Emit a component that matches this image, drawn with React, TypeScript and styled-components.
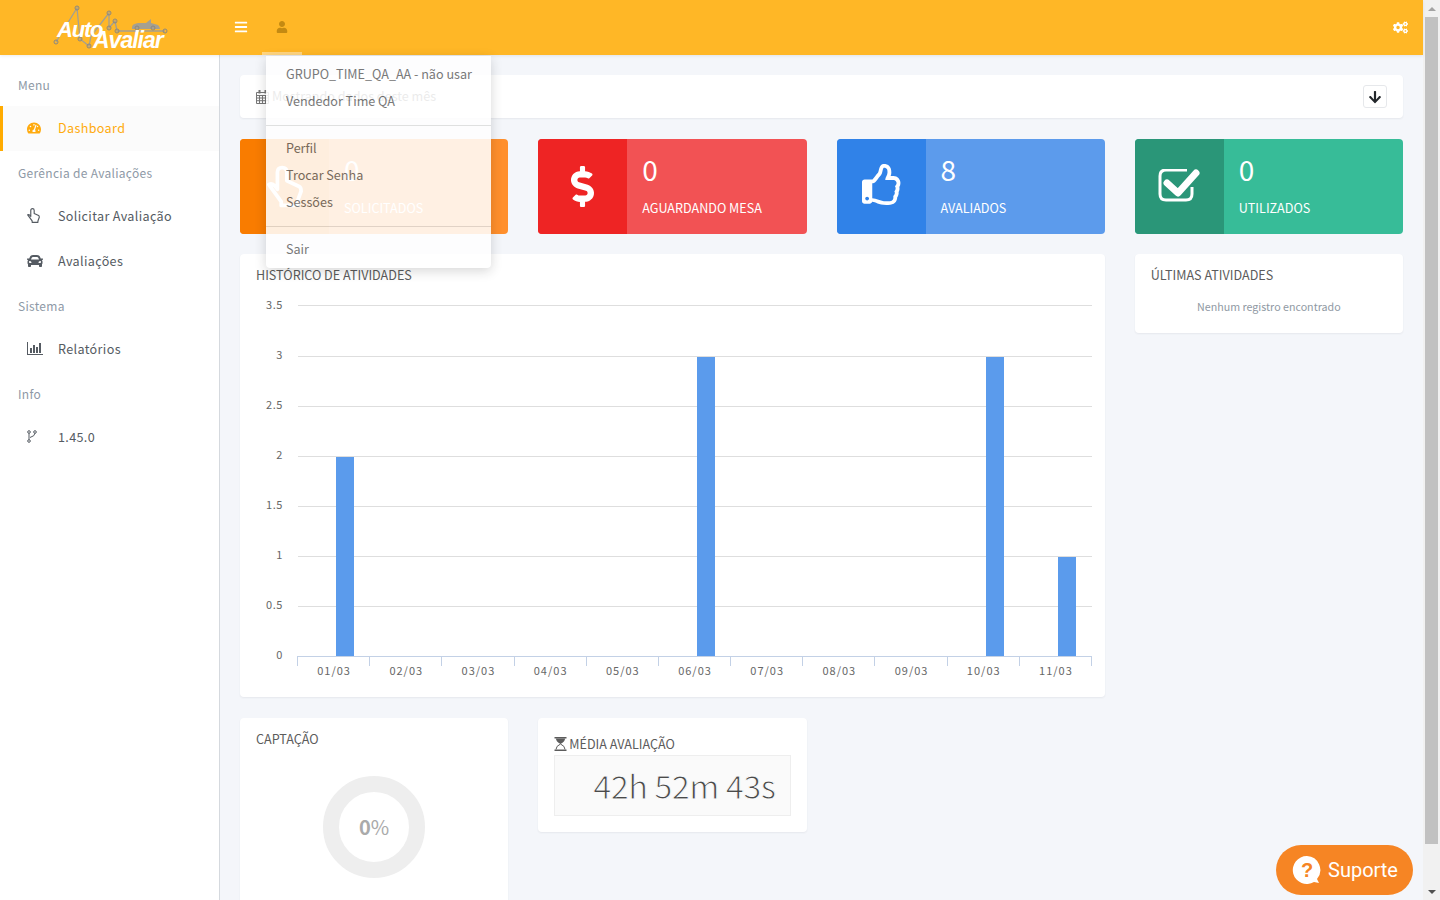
import React from "react";
import styled, { createGlobalStyle } from "styled-components";
import { FaArrowDown, FaBars, FaCar, FaCogs, FaDollarSign, FaRegThumbsUp, FaTachometerAlt, FaUser } from "react-icons/fa";

const GlobalStyle = createGlobalStyle`
  html, body {
    margin: 0;
    padding: 0;
    height: 100%;
    overflow: hidden;
  }
  body {
    font-family: "Noto Sans CJK SC", "Noto Sans", sans-serif;
    font-size: 12.6px;
    color: #555;
    background: #f4f6fa;
  }
  * {
    box-sizing: border-box;
  }
`;

const Shell = styled.div`
  display: flex;
  width: 1440px;
  height: 900px;
  overflow: hidden;
`;

const Page = styled.div`
  flex: 1;
  min-width: 0;
  display: flex;
  flex-direction: column;
  position: relative;
`;

const Header = styled.header`
  height: 55px;
  flex: none;
  display: flex;
  align-items: stretch;
  background: #ffb726;
  box-shadow: 0 1px 3px rgba(0, 0, 0, 0.08);
  position: relative;
  z-index: 2;
`;

const Brand = styled.div`
  width: 221px;
  flex: none;
`;

const NavItem = styled.div<{ $active?: boolean }>`
  width: 40px;
  height: 55px;
  margin-right: 1px;
  display: flex;
  align-items: center;
  justify-content: center;
  color: ${(p) => (p.$active ? "#c48a12" : "#fff")};
  font-size: ${(p) => (p.$active ? "12px" : "14px")};
  border-bottom: 3px solid ${(p) => (p.$active ? "rgba(255,255,255,0.42)" : "transparent")};
  padding-top: 2px;
`;

const HeaderRight = styled.div`
  margin-left: auto;
  width: 46px;
  display: flex;
  align-items: center;
  justify-content: center;
  color: #fff;
  font-size: 15px;
`;

const Body = styled.div`
  flex: 1;
  min-height: 0;
  display: flex;
`;

const Sidebar = styled.aside`
  width: 220px;
  flex: none;
  background: #fff;
  border-right: 1px solid #d5d9de;
  padding-top: 8px;
`;

const SideLabel = styled.div`
  height: 43px;
  padding: 0 0 1px 18px;
  display: flex;
  align-items: center;
  font-size: 12px;
  letter-spacing: 0.3px;
  color: #8e99a6;
`;

const SideRow = styled.div<{ $active?: boolean }>`
  height: 45px;
  display: flex;
  align-items: center;
  padding: 0 0 2px ${(p) => (p.$active ? "24px" : "27px")};
  border-left: ${(p) => (p.$active ? "3px solid #ffab00" : "none")};
  background: ${(p) => (p.$active ? "#fbfbfb" : "transparent")};
  color: ${(p) => (p.$active ? "#ffab0f" : "#555b62")};
  font-size: 12.6px;
  letter-spacing: 0.35px;
  line-height: 20px;
`;

const SideIcon = styled.span`
  width: 31px;
  flex: none;
  display: flex;
  align-items: center;
  font-size: 16px;
`;

const Main = styled.main`
  flex: 1;
  min-width: 0;
  padding: 20px 20px 0;
  overflow: hidden;
`;

const Panel = styled.section`
  background: #fff;
  border-radius: 4px;
  box-shadow: 0 1px 2px rgba(40, 50, 70, 0.07);
`;

const FilterBar = styled(Panel)`
  height: 43px;
  padding: 0 16px;
  display: flex;
  align-items: center;
  margin-bottom: 21px;
`;

const FilterText = styled.span`
  display: flex;
  align-items: center;
  gap: 3px;
  color: #777;
  font-size: 12.6px;
  & > span {
    color: #666;
    margin-bottom: 2px;
  }
`;

const ToggleButton = styled.button`
  margin-left: auto;
  width: 24px;
  height: 23px;
  padding: 0;
  display: flex;
  align-items: center;
  justify-content: center;
  background: #fff;
  border: 1px solid #e6e8eb;
  border-radius: 3px;
  color: #23272b;
  font-size: 14px;
`;

const Grid = styled.div`
  display: grid;
  grid-template-columns: repeat(4, minmax(0, 1fr));
  column-gap: 30px;
  row-gap: 20px;
  align-items: start;
`;

const StatCard = styled.div<{ $bg: string }>`
  height: 95px;
  display: flex;
  border-radius: 4px;
  overflow: hidden;
  background: ${(p) => p.$bg};
  color: #fff;
`;

const StatIcon = styled.div<{ $bg: string }>`
  width: 89px;
  flex: none;
  display: flex;
  align-items: center;
  justify-content: center;
  background: ${(p) => p.$bg};
  font-size: 41px;
`;

const ThumbIcon = styled(FaRegThumbsUp)`
  margin: 0 0 4px 2px;
`;

const StatBody = styled.div`
  padding: 12px 0 0 15px;
`;

const StatValue = styled.div`
  font-size: 28px;
  line-height: 36px;
`;

const StatLabel = styled.div`
  margin-top: 11px;
  font-size: 12.6px;
  line-height: 20px;
`;

const ChartPanel = styled(Panel)`
  grid-column: span 3;
  height: 443px;
  padding: 11px 16px 0;
  margin-bottom: 1px;
`;

const ActivityPanel = styled(Panel)`
  height: 79px;
  padding: 11px 16px 0;
`;

const PanelTitle = styled.h3`
  margin: 0;
  font-size: 12.6px;
  font-weight: 400;
  line-height: 20px;
  color: #5c5c5c;
`;

const EmptyNote = styled.p`
  margin: 13px 0 0;
  font-size: 10.7px;
  line-height: 18px;
  text-align: center;
  color: #8f99a3;
`;

const ChartSvg = styled.svg`
  display: block;
  margin: 10px 0 0 -16px;
  text {
    font-family: "Noto Sans CJK SC", "Noto Sans", sans-serif;
    font-size: 11px;
    fill: #666;
  }
`;

const CaptureCard = styled(Panel)`
  height: 300px;
  padding: 11px 16px 0;
`;

const DonutWrap = styled.div`
  margin-top: 27px;
  display: flex;
  justify-content: center;
`;

const Donut = styled.div`
  width: 102px;
  height: 102px;
  border-radius: 50%;
  border: 16px solid #eee;
  display: flex;
  align-items: center;
  justify-content: center;
  color: #aaa;
  font-size: 20px;
  line-height: 1;
  & > b {
    font-weight: 700;
  }
`;

const AverageCard = styled(Panel)`
  height: 114px;
  padding: 15px 16px 0;
`;

const AverageTitle = styled(PanelTitle)`
  display: flex;
  align-items: center;
  gap: 2px;
  height: 22px;
`;

// only the regular weight of this font is installed, the stroke in the box colour thins it
const AverageBox = styled.div`
  height: 61px;
  background: #fafafa;
  border: 1px solid #eee;
  text-align: right;
  padding-right: 14px;
  font-size: 32.6px;
  letter-spacing: -0.55px;
  line-height: 58px;
  color: #4a4a4a;
  -webkit-text-stroke: 1px #fafafa;
`;

const Dropdown = styled.div`
  position: absolute;
  left: 266px;
  top: 56px;
  width: 225px;
  height: 212px;
  z-index: 3;
  background: #fff;
  opacity: 0.87;
  border-radius: 0 0 4px 4px;
  box-shadow: 0 3px 12px rgba(0, 0, 0, 0.18);
  padding: 5px 0;
`;

const DropItem = styled.div`
  height: 27px;
  padding: 0 0 2px 20px;
  display: flex;
  align-items: center;
  font-size: 12.6px;
  color: #666;
  white-space: nowrap;
`;

const DropDivider = styled.hr`
  margin: 10px 0 9px;
  border: none;
  border-top: 1px solid #ddd;
`;

const SupportButton = styled.div`
  position: absolute;
  left: 1276px;
  top: 845px;
  width: 137px;
  height: 50px;
  z-index: 4;
  border-radius: 25px;
  background: #f68524;
  color: #fff;
  display: flex;
  align-items: center;
  padding-left: 16px;
  gap: 6px;
  font-family: Roboto, sans-serif;
  font-size: 20px;
`;

const ScrollTrack = styled.div`
  width: 17px;
  flex: none;
  height: 900px;
  background: #f1f1f1;
  display: flex;
  flex-direction: column;
  align-items: center;
`;

const ScrollArrow = styled.div<{ $up?: boolean }>`
  width: 17px;
  height: 17px;
  flex: none;
  display: flex;
  align-items: center;
  justify-content: center;
  &::before {
    content: "";
    border-left: 4px solid transparent;
    border-right: 4px solid transparent;
    ${(p) => (p.$up ? "border-bottom: 4px solid #a3a3a3;" : "border-top: 4px solid #505050;")}
  }
`;

const ScrollThumb = styled.div`
  flex: none;
  width: 13px;
  height: 827px;
  margin-bottom: 39px;
  background: #c1c1c1;
`;

const LogoSvg = styled.svg`
  position: absolute;
  left: 50px;
  top: 3px;
`;

const LogoText = styled.text<{ $big?: boolean }>`
  font-family: "Liberation Sans", sans-serif;
  font-weight: 700;
  font-style: italic;
  font-size: ${(p) => (p.$big ? "23px" : "22px")};
  letter-spacing: ${(p) => (p.$big ? "-1px" : "-1.2px")};
  fill: #fff;
`;

function Logo() {
  const dots = [
    [27, 5], [59, 10], [65, 18], [59, 25], [67, 28], [87, 25], [103, 25], [115, 28], [6, 39], [30, 36], [39, 43],
  ];
  return (
    <LogoSvg width={122} height={50} viewBox="0 0 122 50">
      <path
        d="M6 39 L27 5 L30 36 L39 43 L41 33 L59 10 L59 25 L65 18 L67 28 L115 28"
        fill="none"
        stroke="#a5a091"
        strokeWidth={1.3}
      />
      <path d="M82 24 Q82 21 88 20 L96 20 L101 16 L101 20 L108 22 Q110 24 110 26 L82 26 Z" fill="#a5a091" />
      {dots.map(([x, y]) => (
        <circle key={`${x}-${y}`} cx={x} cy={y} r={2} fill="none" stroke="#8c8880" strokeWidth={1} />
      ))}
      <LogoText x={7} y={34}>Auto</LogoText>
      <LogoText $big x={43} y={45}>Avaliar</LogoText>
    </LogoSvg>
  );
}

// FA4 outline hand, no package has it without the finger lines
function HandIcon({ w, h, sw }: { w: number; h: number; sw: number }) {
  return (
    <svg width={w} height={h} viewBox="0 0 38 44">
      <path
        d="M2 20 Q6 17 11 25 V7 Q11 2 16 2 Q21 2 21 7 V16 L34 22 Q36 23 36 27 L32 38 V42 H15 V38 Z"
        fill="none"
        stroke="currentColor"
        strokeWidth={sw}
        strokeLinejoin="round"
      />
    </svg>
  );
}

function CheckIcon() {
  return (
    <svg width={42} height={36} viewBox="0 2 42 36">
      <path d="M29 3 H8 Q2 3 2 9 V27 Q2 33 8 33 H28 Q34 33 34 27 V20" fill="none" stroke="currentColor" strokeWidth={3} />
      <path d="M9 16 L20 26 L38 6" fill="none" stroke="currentColor" strokeWidth={7} strokeLinecap="round" strokeLinejoin="round" />
    </svg>
  );
}

function ForkIcon() {
  return (
    <svg width={10} height={13} viewBox="0 0 10 13">
      <circle cx={2} cy={2} r={1.3} fill="none" stroke="currentColor" />
      <circle cx={8} cy={2} r={1.3} fill="none" stroke="currentColor" />
      <circle cx={2} cy={11} r={1.3} fill="none" stroke="currentColor" />
      <path d="M2 3.2 V9.8 M8 3.2 Q8 6 3 7.5" fill="none" stroke="currentColor" />
    </svg>
  );
}

function BarsIcon() {
  return (
    <svg width={16} height={13} viewBox="0 0 16 13">
      <path d="M0 0h1v12h15v1H0z M3 6h2v5H3z M6 3h2v8H6z M9 5h2v6H9z M12 1h2v10h-2z" fill="currentColor" />
    </svg>
  );
}

function CalendarIcon() {
  return (
    <svg width={13} height={14} viewBox="0 0 13 14">
      <path
        d="M0.5 2.5h12v11H0.5z M0.5 5.5h12 M3.5 5.5v8 M6.5 5.5v8 M9.5 5.5v8 M0.5 8h12 M0.5 10.7h12"
        fill="none"
        stroke="currentColor"
        strokeWidth={1}
      />
      <path d="M2.5 0h2v3.5h-2z M8.5 0h2v3.5h-2z" fill="currentColor" />
    </svg>
  );
}

function HourglassIcon() {
  return (
    <svg width={13} height={14} viewBox="0 0 13 14">
      <path d="M0.5 0h12v1.6h-12z M0.5 12.4h12V14h-12z" fill="currentColor" />
      <path d="M2 1.6 h9 Q11 5 6.5 7 Q2 5 2 1.6z" fill="currentColor" />
      <path d="M2 12.4 Q2 9 6.5 7 Q11 9 11 12.4" fill="none" stroke="currentColor" />
    </svg>
  );
}

const CHART_W = 865;
const yTicks = [
  { label: "3.5", y: 10 },
  { label: "3", y: 61 },
  { label: "2.5", y: 111 },
  { label: "2", y: 161 },
  { label: "1.5", y: 211 },
  { label: "1", y: 261 },
  { label: "0.5", y: 311 },
  { label: "0", y: 361 },
];
const xLabels = ["01/03", "02/03", "03/03", "04/03", "05/03", "06/03", "07/03", "08/03", "09/03", "10/03", "11/03"];
const bars = [
  { x: 96, top: 162 },
  { x: 457, top: 62 },
  { x: 746, top: 62 },
  { x: 818, top: 262 },
];

// x and y here are in the svg's own space: page x - 240, page y - 295
function HistoryChart() {
  const left = 58;
  const right = 852;
  const base = 361;
  const step = (right - left) / 11;
  return (
    <ChartSvg width={CHART_W} height={395} viewBox={`0 0 ${CHART_W} 395`}>
      {yTicks.map((t, i) => (
        <g key={t.label}>
          {t.y < base && <line x1={left} x2={right} y1={t.y + 0.5} y2={t.y + 0.5} stroke="#dedede" />}
          <text x={43} y={14 + i * 50} textAnchor="end" letterSpacing={0.6}>{t.label}</text>
        </g>
      ))}
      {bars.map((b) => (
        <rect key={b.x} x={b.x} y={b.top} width={18} height={base - b.top} fill="#5b9bec" />
      ))}
      <line x1={left} x2={right} y1={base + 0.5} y2={base + 0.5} stroke="#c3d1e6" />
      {Array.from({ length: 12 }, (_, i) => {
        const x = Math.round(left + i * step) - 0.5;
        return <line key={i} x1={x} x2={x} y1={base} y2={base + 10} stroke="#c3d1e6" />;
      })}
      {xLabels.map((label, i) => (
        <text key={label} x={left + step * (i + 0.5)} y={380} textAnchor="middle" letterSpacing={1}>
          {label}
        </text>
      ))}
    </ChartSvg>
  );
}

const stats = [
  { value: "0", label: "SOLICITADOS", bg: "#ff8f2c", dark: "#f97c00", icon: <HandIcon w={36} h={43} sw={4} /> },
  { value: "0", label: "AGUARDANDO MESA", bg: "#f25254", dark: "#ee2424", icon: <FaDollarSign /> },
  { value: "8", label: "AVALIADOS", bg: "#5c9bec", dark: "#3082e8", icon: <ThumbIcon /> },
  { value: "0", label: "UTILIZADOS", bg: "#37bc98", dark: "#2a9678", icon: <CheckIcon /> },
];

export default function App() {
  return (
    <>
      <GlobalStyle />
      <Shell>
        <Page>
          <Header>
            <Brand />
            <Logo />
            <NavItem>
              <FaBars />
            </NavItem>
            <NavItem $active>
              <FaUser />
            </NavItem>
            <HeaderRight>
              <FaCogs />
            </HeaderRight>
          </Header>
          <Body>
            <Sidebar>
              <SideLabel>Menu</SideLabel>
              <SideRow $active>
                <SideIcon><FaTachometerAlt size={14} /></SideIcon>
                Dashboard
              </SideRow>
              <SideLabel>Gerência de Avaliações</SideLabel>
              <SideRow>
                <SideIcon><HandIcon w={13} h={15} sw={3.4} /></SideIcon>
                Solicitar Avaliação
              </SideRow>
              <SideRow>
                <SideIcon><FaCar /></SideIcon>
                Avaliações
              </SideRow>
              <SideLabel>Sistema</SideLabel>
              <SideRow>
                <SideIcon><BarsIcon /></SideIcon>
                Relatórios
              </SideRow>
              <SideLabel>Info</SideLabel>
              <SideRow>
                <SideIcon><ForkIcon /></SideIcon>
                1.45.0
              </SideRow>
            </Sidebar>
            <Main>
              <FilterBar>
                <FilterText>
                  <CalendarIcon />
                  <span>Mostrando dados deste mês</span>
                </FilterText>
                <ToggleButton><FaArrowDown /></ToggleButton>
              </FilterBar>
              <Grid>
                {stats.map((s) => (
                  <StatCard key={s.label} $bg={s.bg}>
                    <StatIcon $bg={s.dark}>{s.icon}</StatIcon>
                    <StatBody>
                      <StatValue>{s.value}</StatValue>
                      <StatLabel>{s.label}</StatLabel>
                    </StatBody>
                  </StatCard>
                ))}
                <ChartPanel>
                  <PanelTitle>HISTÓRICO DE ATIVIDADES</PanelTitle>
                  <HistoryChart />
                </ChartPanel>
                <ActivityPanel>
                  <PanelTitle>ÚLTIMAS ATIVIDADES</PanelTitle>
                  <EmptyNote>Nenhum registro encontrado</EmptyNote>
                </ActivityPanel>
                <CaptureCard>
                  <PanelTitle>CAPTAÇÃO</PanelTitle>
                  <DonutWrap>
                    <Donut><b>0</b>%</Donut>
                  </DonutWrap>
                </CaptureCard>
                <AverageCard>
                  <AverageTitle><HourglassIcon />MÉDIA AVALIAÇÃO</AverageTitle>
                  <AverageBox>42h 52m 43s</AverageBox>
                </AverageCard>
              </Grid>
            </Main>
          </Body>
          <Dropdown>
            <DropItem>GRUPO_TIME_QA_AA - não usar</DropItem>
            <DropItem>Vendedor Time QA</DropItem>
            <DropDivider />
            <DropItem>Perfil</DropItem>
            <DropItem>Trocar Senha</DropItem>
            <DropItem>Sessões</DropItem>
            <DropDivider />
            <DropItem>Sair</DropItem>
          </Dropdown>
        </Page>
        <ScrollTrack>
          <ScrollArrow $up />
          <ScrollThumb />
          <ScrollArrow />
        </ScrollTrack>
        <SupportButton>
          <svg width="30" height="30" viewBox="0 0 30 30">
            <path d="M15 1a14 14 0 1 0 7 26l5 1-2-4a14 14 0 0 0-10-23z" fill="#fff" />
            <text x="15" y="22" textAnchor="middle" fontFamily="Liberation Sans, sans-serif" fontWeight="700" fontSize="20" fill="#f68524">?</text>
          </svg>
          Suporte
        </SupportButton>
      </Shell>
    </>
  );
}
